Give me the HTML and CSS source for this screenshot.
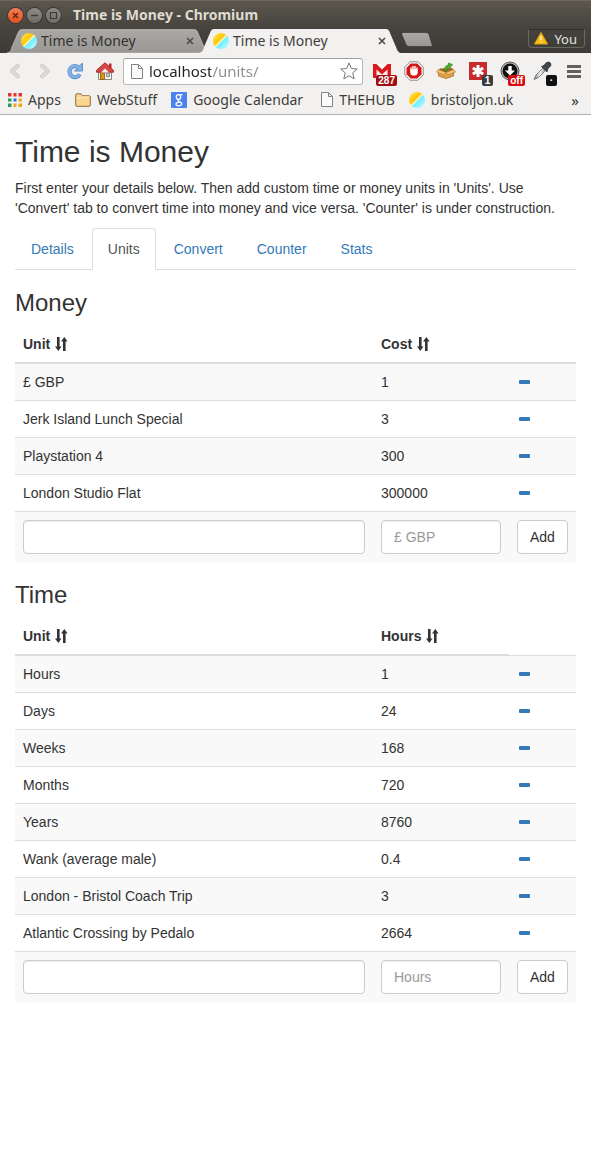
FILE: index.html
```
<!DOCTYPE html>
<html lang="en">
<head>
<meta charset="utf-8">
<meta name="viewport" content="width=device-width, initial-scale=1">
<title>Time is Money</title>
<link rel="stylesheet" href="styles.css">
</head>
<body>
<svg class="defs" width="0" height="0" aria-hidden="true">
  <defs>
    <linearGradient id="tabGrey" x1="0" y1="0" x2="0" y2="1"><stop offset="0" stop-color="#aaa9a6"/><stop offset="1" stop-color="#999794"/></linearGradient>
    <linearGradient id="ballFill" x1="0" y1="0" x2="1" y2="1"><stop offset=".1" stop-color="#ffe14d"/><stop offset=".42" stop-color="#ffc400"/><stop offset=".5" stop-color="#fff3bf"/><stop offset=".56" stop-color="#6ff0ff"/><stop offset=".9" stop-color="#b5f8ff"/></linearGradient>
    <linearGradient id="metal" x1="0" y1="0" x2="1" y2="0"><stop offset="0" stop-color="#777"/><stop offset=".5" stop-color="#f4f4f4"/><stop offset="1" stop-color="#888"/></linearGradient>
    <symbol id="ball" viewBox="0 0 16 16"><circle cx="8" cy="8" r="8" fill="url(#ballFill)"/></symbol>
    <symbol id="page" viewBox="0 0 12 15"><path d="M.5.5h7l4 4v10H.5zM7.500.5v4h4" fill="#fafafa" stroke="#828282"/></symbol>
    <symbol id="sort" viewBox="0 0 14 14"><path d="M3 0h2.600v9.500H7.500L4.300 14 1 9.500h2zM9 14h2.600V4.500h2L10.300 0 7 4.500h2z" fill="#333"/></symbol>
    <symbol id="minus" viewBox="0 0 14 14"><rect x="2" y="5" width="11" height="4" rx="1" fill="#337ab7"/></symbol>
  </defs>
</svg>

<header class="browser">
  <div class="titlebar">
    <button class="win close" aria-label="Close"><svg width="15" height="15"><path d="M5 5l5 5m0-5l-5 5" stroke="#64250f" stroke-width="1.500"/></svg></button>
    <button class="win" aria-label="Minimize"><svg width="15" height="15"><path d="M4 7.500h7" stroke="#3b3a36" stroke-width="1.400"/></svg></button>
    <button class="win" aria-label="Maximize"><svg width="15" height="15"><path d="M4.500 4.500h6v6h-6z" fill="none" stroke="#3b3a36" stroke-width="1.200"/></svg></button>
    <span class="window-title">Time is Money - Chromium</span>
  </div>
  <div class="tabstrip">
    <div class="tab">
      <svg class="tab-shape" viewBox="0 0 202 24" preserveAspectRatio="none"><path d="M0 24C4 23 4 21 5 18L11 4Q12 .5 15 .5H187Q190 .5 191 4L197 18Q199 24 202 24z" fill="url(#tabGrey)" stroke="#c2c1be" stroke-width=".7"/></svg>
      <svg class="fav" width="16" height="16"><use href="#ball"/></svg><span class="tab-name">Time is Money</span>
      <button class="tab-close" aria-label="Close tab"><svg width="8" height="8"><path d="M1 1l6 6m0-6L1 7" stroke="#4a4a4a" stroke-width="1.600"/></svg></button>
    </div>
    <div class="tab current">
      <svg class="tab-shape" viewBox="0 0 202 24" preserveAspectRatio="none"><path d="M0 24C4 23 4 21 5 18L11 4Q12 0 15 0H187Q190 0 191 4L197 18Q199 24 202 24z" fill="#f2f1f0"/></svg>
      <svg class="fav" width="16" height="16"><use href="#ball"/></svg><span class="tab-name">Time is Money</span>
      <button class="tab-close" aria-label="Close tab"><svg width="8" height="8"><path d="M1 1l6 6m0-6L1 7" stroke="#4a4a4a" stroke-width="1.600"/></svg></button>
    </div>
    <button class="new-tab" aria-label="New tab"><svg width="32" height="16"><path d="M2 .5h23q2 0 3 2l3 10q1 2-1 2H8q-2 0-3-2L1 3Q0 .5 2 .5z" fill="url(#tabGrey)" stroke="#2f2e2a" stroke-width=".6"/></svg></button>
    <button class="profile"><svg width="14" height="13"><path d="M7 .5L13.500 12H.5z" fill="#fdbc16" stroke="#e3a20c" stroke-linejoin="round"/><path d="M7 4v4m0 1.200v1.500" stroke="#fff6d8" stroke-width="1.400"/></svg>You</button>
  </div>
  <div class="toolbar">
    <button class="nav-btn" aria-label="Back"><svg width="12" height="18"><path d="M9 3.500L3 9l6 5.500" fill="none" stroke="#c9c7c4" stroke-width="4" stroke-linecap="round" stroke-linejoin="round"/><path d="M9 3.500L3 9l6 5.500" fill="none" stroke="#dddbd8" stroke-width="2.800" stroke-linecap="round" stroke-linejoin="round"/></svg></button>
    <button class="nav-btn" aria-label="Forward"><svg width="12" height="18"><path d="M3 3.500L9 9l-6 5.500" fill="none" stroke="#c9c7c4" stroke-width="4" stroke-linecap="round" stroke-linejoin="round"/><path d="M3 3.500L9 9l-6 5.500" fill="none" stroke="#dddbd8" stroke-width="2.800" stroke-linecap="round" stroke-linejoin="round"/></svg></button>
    <button class="nav-btn" aria-label="Reload"><svg width="18" height="18"><path d="M12.800 5.600A5.500 5.500 0 1 0 13.800 12.300" fill="none" stroke="#5b8fc9" stroke-width="4.200"/><path d="M16.500 1v8H8.500z" fill="#82b1e4" stroke="#5b8fc9"/><path d="M12.800 5.600A5.500 5.500 0 1 0 13.500 12.300" fill="none" stroke="#82b1e4" stroke-width="2.800"/></svg></button>
    <button class="nav-btn" aria-label="Home"><svg width="18" height="18"><path d="M13 1.500h2.500v5H13z" fill="#b72b2b"/><path d="M2.500 9h13v8.500h-13z" fill="#f3f1ec" stroke="#8d8b86"/><path d="M4.500 11h4v6.500h-4z" fill="#d9951b" stroke="#8f5902" stroke-width=".8"/><path d="M10.500 11h3v3.500h-3z" fill="#b8cce0" stroke="#777" stroke-width=".8"/><path d="M9 .8L.6 8.200v2h16.800v-2z" fill="#d94848" stroke="#a92c2c" stroke-linejoin="round"/><path d="M9 6.500L5 10.500h8z" fill="#f3f1ec"/></svg></button>
    <div class="omnibox">
      <svg width="12" height="15"><use href="#page"/></svg>
      <input class="address" type="text" aria-label="Address" value="localhost/units/">
      <button class="star" aria-label="Bookmark this page"><svg width="18" height="18"><path d="M9 1l2.300 5.500 6 .5-4.600 3.900L14.200 17 9 13.700 3.800 17l1.500-6.100L.7 7l6-.5z" fill="#fff" stroke="#777" stroke-linejoin="round"/></svg></button>
    </div>
    <div class="extensions">
      <button class="ext" aria-label="Mail"><svg width="20" height="20"><path d="M1 3h18v14H1z" fill="#dc1a1e"/><path d="M4.500 8.500L10 13.500l5.500-5V17h-11z" fill="#f7eeee"/><path d="M4.500 3h11L10 8.500z" fill="#fff"/></svg><span class="badge red">287</span></button>
      <button class="ext" aria-label="Blocker"><svg width="20" height="20"><path d="M6 .8h8L19.200 6v8L14 19.200H6L.8 14V6z" fill="#fff" stroke="#888"/><path d="M6.700 2.500h6.600l4.200 4.200v6.600l-4.200 4.200H6.700l-4.200-4.200V6.700z" fill="#d31515"/><path d="M7 9.500V7m2 2V5.500m2 3.500V5.500M13 9V7" stroke="#fff" stroke-width="1.400" stroke-linecap="round"/><path d="M6.300 8.500h7.400v3q0 3-3 3H9q-2.700 0-2.700-3z" fill="#fff"/></svg></button>
      <button class="ext" aria-label="Box"><svg width="20" height="20"><path d="M2.500 9.500l7.500 2 7.500-2V15L10 17.500 2.500 15z" fill="#e2a24a" stroke="#a87020" stroke-width=".8"/><path d="M4 7.500l12-.5 2 2.500-8 2-7.500-2z" fill="#9a641c"/><path d="M2.500 8.500l7.500 3-2 2.500-7.500-3zM17.500 8.500l-7.500 3 2 2.500 7.500-3z" fill="#f2c274" stroke="#b57c2b" stroke-width=".7"/><path d="M8.500 10Q8 4.500 12.500 4V2l4 1.500-3 4V6.300Q10.500 6.500 10.500 10z" fill="#4fae2c" stroke="#2b7b16" stroke-width=".6"/></svg></button>
      <button class="ext" aria-label="Passwords"><svg width="20" height="20"><path d="M1 1h18v18H1z" fill="#c62c2c"/><path d="M10 4v12M4.800 7l10.400 6M15.200 7L4.800 13" stroke="#fff" stroke-width="3"/></svg><span class="badge">1</span></button>
      <button class="ext" aria-label="Downloads"><svg width="20" height="20"><circle cx="10" cy="10" r="9" fill="#bbb" stroke="#555"/><circle cx="10" cy="10" r="7.500" fill="#111"/><path d="M8.300 5h3.400v4.500H15l-5 5-5-5h3.300z" fill="#fff"/></svg><span class="badge bright">off</span></button>
      <button class="ext" aria-label="Colour picker"><svg width="20" height="20"><path d="M2 18.500L4 14l7.500-7.500 2.500 2.500L6.500 16.500z" fill="url(#metal)" stroke="#666" stroke-width=".8"/><path d="M9.500 5.500l2.500-1Q14 .5 17 1q2.500 1 1.800 3.500Q18 6 16 7.500L15 11z" fill="#424850" stroke="#24282d" stroke-width=".7"/></svg><span class="badge black">·</span></button>
      <button class="ext menu" aria-label="Menu"><svg width="14" height="14"><path d="M0 2.500h14M0 7.500h14M0 12.500h14" stroke="#62605d" stroke-width="3"/></svg></button>
    </div>
  </div>
  <nav class="bookmarks" aria-label="Bookmarks">
    <a href="#"><svg width="14" height="14"><path d="M0 0h4v4H0zM5 0h4v4H5zM10 0h4v4h-4z" fill="#e5352d"/><path d="M0 5h4v4H0zM0 10h4v4H0z" fill="#279b57"/><path d="M5 5h4v4H5z" fill="#2876e0"/><path d="M5 10h4v4H5zM10 10h4v4h-4zM10 5h4v4h-4z" fill="#f3a51b"/><path d="M4.500 0v14m5-14v14M0 4.500h14m-14 5h14" stroke="#f2f1f0" stroke-width="2"/></svg>Apps</a>
    <a href="#"><svg width="16" height="14"><path d="M.7 12V2Q.7.8 2 .8h4l1.500 2H14q1.300 0 1.300 1.200v8q0 1.300-1.300 1.300H2Q.7 13.300.7 12z" fill="#f9d68f" stroke="#8c6b3d"/><path d="M1.500 5h5l1.500-1h6.500" stroke="#fff0ca" fill="none"/></svg>WebStuff</a>
    <a href="#"><svg width="16" height="16"><rect width="16" height="16" rx="1" fill="#4a83ee"/><g fill="none" stroke="#fff" stroke-width="1.300"><ellipse cx="7.500" cy="5" rx="2.200" ry="2.400"/><path d="M9 2.600h2.500M8.500 7.300Q6 8.300 7.500 9.300q3.700 1 3.200 3-.8 1.700-3.200 1.500-2.800-.3-2.500-1.800.5-1.700 3.500-1.800"/></g></svg>Google Calendar</a>
    <a href="#" class="page-link"><svg width="12" height="15"><use href="#page"/></svg>THEHUB</a>
    <a href="#"><svg width="16" height="16"><use href="#ball"/></svg>bristoljon.uk</a>
    <button class="more" aria-label="More bookmarks">»</button>
  </nav>
</header>

<main class="content">
  <h1>Time is Money</h1>
  <p>First enter your details below. Then add custom time or money units in 'Units'. Use 'Convert' tab to convert time into money and vice versa. 'Counter' is under construction.</p>
  <nav class="nav-tabs" aria-label="Sections">
    <a href="#">Details</a>
    <a href="#" class="active" aria-current="page">Units</a>
    <a href="#">Convert</a>
    <a href="#">Counter</a>
    <a href="#">Stats</a>
  </nav>

  <h2>Money</h2>
  <table>
    <colgroup><col><col class="value"><col class="action"></colgroup>
    <thead><tr><th>Unit <svg class="glyph" width="14" height="14"><use href="#sort"/></svg></th><th>Cost <svg class="glyph" width="14" height="14"><use href="#sort"/></svg></th><th></th></tr></thead>
    <tbody>
      <tr><td>£ GBP</td><td>1</td><td><a href="#" aria-label="Remove £ GBP"><svg class="glyph" width="14" height="14"><use href="#minus"/></svg></a></td></tr>
      <tr><td>Jerk Island Lunch Special</td><td>3</td><td><a href="#" aria-label="Remove Jerk Island Lunch Special"><svg class="glyph" width="14" height="14"><use href="#minus"/></svg></a></td></tr>
      <tr><td>Playstation 4</td><td>300</td><td><a href="#" aria-label="Remove Playstation 4"><svg class="glyph" width="14" height="14"><use href="#minus"/></svg></a></td></tr>
      <tr><td>London Studio Flat</td><td>300000</td><td><a href="#" aria-label="Remove London Studio Flat"><svg class="glyph" width="14" height="14"><use href="#minus"/></svg></a></td></tr>
      <tr><td><input class="field" type="text" aria-label="Money unit"></td><td><input class="field" type="text" aria-label="Cost" placeholder="£ GBP"></td><td><button class="add">Add</button></td></tr>
    </tbody>
  </table>

  <h2>Time</h2>
  <table>
    <colgroup><col><col class="value"><col class="action"></colgroup>
    <thead><tr><th>Unit <svg class="glyph" width="14" height="14"><use href="#sort"/></svg></th><th>Hours <svg class="glyph" width="14" height="14"><use href="#sort"/></svg></th></tr></thead>
    <tbody>
      <tr><td>Hours</td><td>1</td><td><a href="#" aria-label="Remove Hours"><svg class="glyph" width="14" height="14"><use href="#minus"/></svg></a></td></tr>
      <tr><td>Days</td><td>24</td><td><a href="#" aria-label="Remove Days"><svg class="glyph" width="14" height="14"><use href="#minus"/></svg></a></td></tr>
      <tr><td>Weeks</td><td>168</td><td><a href="#" aria-label="Remove Weeks"><svg class="glyph" width="14" height="14"><use href="#minus"/></svg></a></td></tr>
      <tr><td>Months</td><td>720</td><td><a href="#" aria-label="Remove Months"><svg class="glyph" width="14" height="14"><use href="#minus"/></svg></a></td></tr>
      <tr><td>Years</td><td>8760</td><td><a href="#" aria-label="Remove Years"><svg class="glyph" width="14" height="14"><use href="#minus"/></svg></a></td></tr>
      <tr><td>Wank (average male)</td><td>0.4</td><td><a href="#" aria-label="Remove Wank (average male)"><svg class="glyph" width="14" height="14"><use href="#minus"/></svg></a></td></tr>
      <tr><td>London - Bristol Coach Trip</td><td>3</td><td><a href="#" aria-label="Remove London - Bristol Coach Trip"><svg class="glyph" width="14" height="14"><use href="#minus"/></svg></a></td></tr>
      <tr><td>Atlantic Crossing by Pedalo</td><td>2664</td><td><a href="#" aria-label="Remove Atlantic Crossing by Pedalo"><svg class="glyph" width="14" height="14"><use href="#minus"/></svg></a></td></tr>
      <tr><td><input class="field" type="text" aria-label="Time unit"></td><td><input class="field" type="text" aria-label="Hours" placeholder="Hours"></td><td><button class="add">Add</button></td></tr>
    </tbody>
  </table>
</main>
</body>
</html>
```
FILE: styles.css
```
* { box-sizing: border-box; }
body {
  margin: 0;
  background: #fff;
  color: #333;
  font: 14px/20px "Liberation Sans", Arial, sans-serif;
}
button { padding: 0; border: 0; background: none; color: inherit; font: inherit; }
a { color: #337ab7; text-decoration: none; }
svg { flex: none; display: block; }
.defs { position: absolute; }

/* Browser window */
.browser {
  background: #f2f1f0;
  border-bottom: 1px solid #b3b1ae;
  font-family: "Noto Sans", "Open Sans", sans-serif;
}
.titlebar {
  display: flex;
  align-items: center;
  gap: 4px;
  height: 29px;
  padding: 0 8px;
  background: linear-gradient(#5b574e, #45433d);
  border-top: 1px solid #6b675e;
}
.win { border-radius: 50%; background: linear-gradient(#8e8b84, #6f6c65); box-shadow: 0 0 0 1px #393732; }
.win.close { background: linear-gradient(#f67c55, #e3501f); }
.window-title { margin-left: 8px; color: #dfdbd2; font-size: 14px; font-weight: 700; }

.tabstrip { display: flex; height: 24px; padding: 0 6px 0 7px; background: linear-gradient(#45433d, #3c3b37); }
.tab {
  position: relative;
  display: flex;
  align-items: center;
  flex: 0 1 202px;
  min-width: 0;
  padding: 0 15px 0 14px;
  color: #33312d;
}
.tab.current { margin-left: -10px; color: #3f3d3a; }
.tab-shape { position: absolute; inset: 0; width: 100%; height: 100%; }
.fav, .tab-name, .tab-close { position: relative; }
.tab-name { flex: 1; margin-left: 4px; font-size: 14px; white-space: nowrap; overflow: hidden; }
.new-tab { align-self: center; margin-top: -2px; }
.profile {
  display: flex;
  align-items: center;
  gap: 6px;
  align-self: flex-start;
  height: 19px;
  margin-left: auto;
  padding: 0 7px 0 5px;
  border: 1px solid #6a6862;
  border-top-color: #2e2d29;
  border-radius: 0 0 4px 4px;
  color: #e6e4df;
  font-size: 13px;
}

.toolbar { display: flex; align-items: center; height: 36px; padding: 0 10px 0 0; }
.nav-btn { display: flex; justify-content: center; width: 30px; flex: none; }
.omnibox {
  display: flex;
  align-items: center;
  flex: 1;
  min-width: 0;
  height: 27px;
  margin: 0 9px 0 3px;
  padding: 0 4px 0 7px;
  border: 1px solid #bab8b5;
  border-top-color: #a09e9b;
  border-radius: 3px;
  background: #fff;
}
.address {
  flex: 1;
  min-width: 0;
  height: 24px;
  padding: 0;
  margin-left: 6px;
  border: 0;
  outline: 0;
  background: linear-gradient(90deg, #222 62px, #8d8d8d 62px);
  -webkit-background-clip: text;
  background-clip: text;
  color: transparent;
  font: 15px/24px "Noto Sans", "Open Sans", sans-serif;
}
.extensions { display: flex; align-items: center; gap: 12px; }
.ext { position: relative; display: block; }
.menu { margin-left: 3px; }
.badge {
  position: absolute;
  right: -5px;
  bottom: -5px;
  min-width: 11px;
  padding: 0 2px;
  border-radius: 2px;
  background: #3d3d3d;
  color: #fff;
  font: bold 10px/11px "Liberation Sans", Arial, sans-serif;
}
.badge.red { background: #a40c14; }
.badge.bright { background: #d80e0e; }
.badge.black { background: #111; }

.bookmarks { display: flex; align-items: center; gap: 14px; height: 25px; padding: 0 12px 4px 8px; }
.bookmarks a { display: flex; align-items: center; gap: 6px; color: #3f3d3a; font-size: 14px; white-space: nowrap; }
.bookmarks .page-link { margin-left: 4px; }
.more { margin-left: auto; font-size: 15px; }

/* Page */
.content { padding: 1px 15px 20px; }
h1, h2 { color: #333; font-weight: normal; }
h1 { margin: 19px 0 10px; font-size: 30px; line-height: 33px; }
h2 { margin: 20px 0 10px; font-size: 24px; line-height: 26px; }
p { margin: 0 0 10px; }
.nav-tabs { display: flex; border-bottom: 1px solid #ddd; }
.nav-tabs a {
  margin: 0 2px -1px 0;
  padding: 10px 15px;
  border: 1px solid transparent;
  border-radius: 4px 4px 0 0;
}
.nav-tabs .active { border-color: #ddd #ddd #fff; background: #fff; color: #555; }

table { width: 100%; table-layout: fixed; border-collapse: collapse; }
.value { width: 136px; }
.action { width: 67px; }
th, td { padding: 8px; text-align: left; vertical-align: top; border-top: 1px solid #ddd; }
th { border-top: 0; border-bottom: 2px solid #ddd; }
tbody tr:nth-child(odd) { background: #f9f9f9; }
.glyph { display: inline-block; vertical-align: -2px; }
.field, .add { display: block; height: 34px; border: 1px solid #ccc; border-radius: 4px; background: #fff; font: inherit; }
.field { width: 100%; padding: 6px 12px; color: #555; box-shadow: inset 0 1px 1px rgba(0, 0, 0, .08); }
.field::placeholder { color: #999; opacity: 1; }
.add { padding: 6px 12px; }
```
